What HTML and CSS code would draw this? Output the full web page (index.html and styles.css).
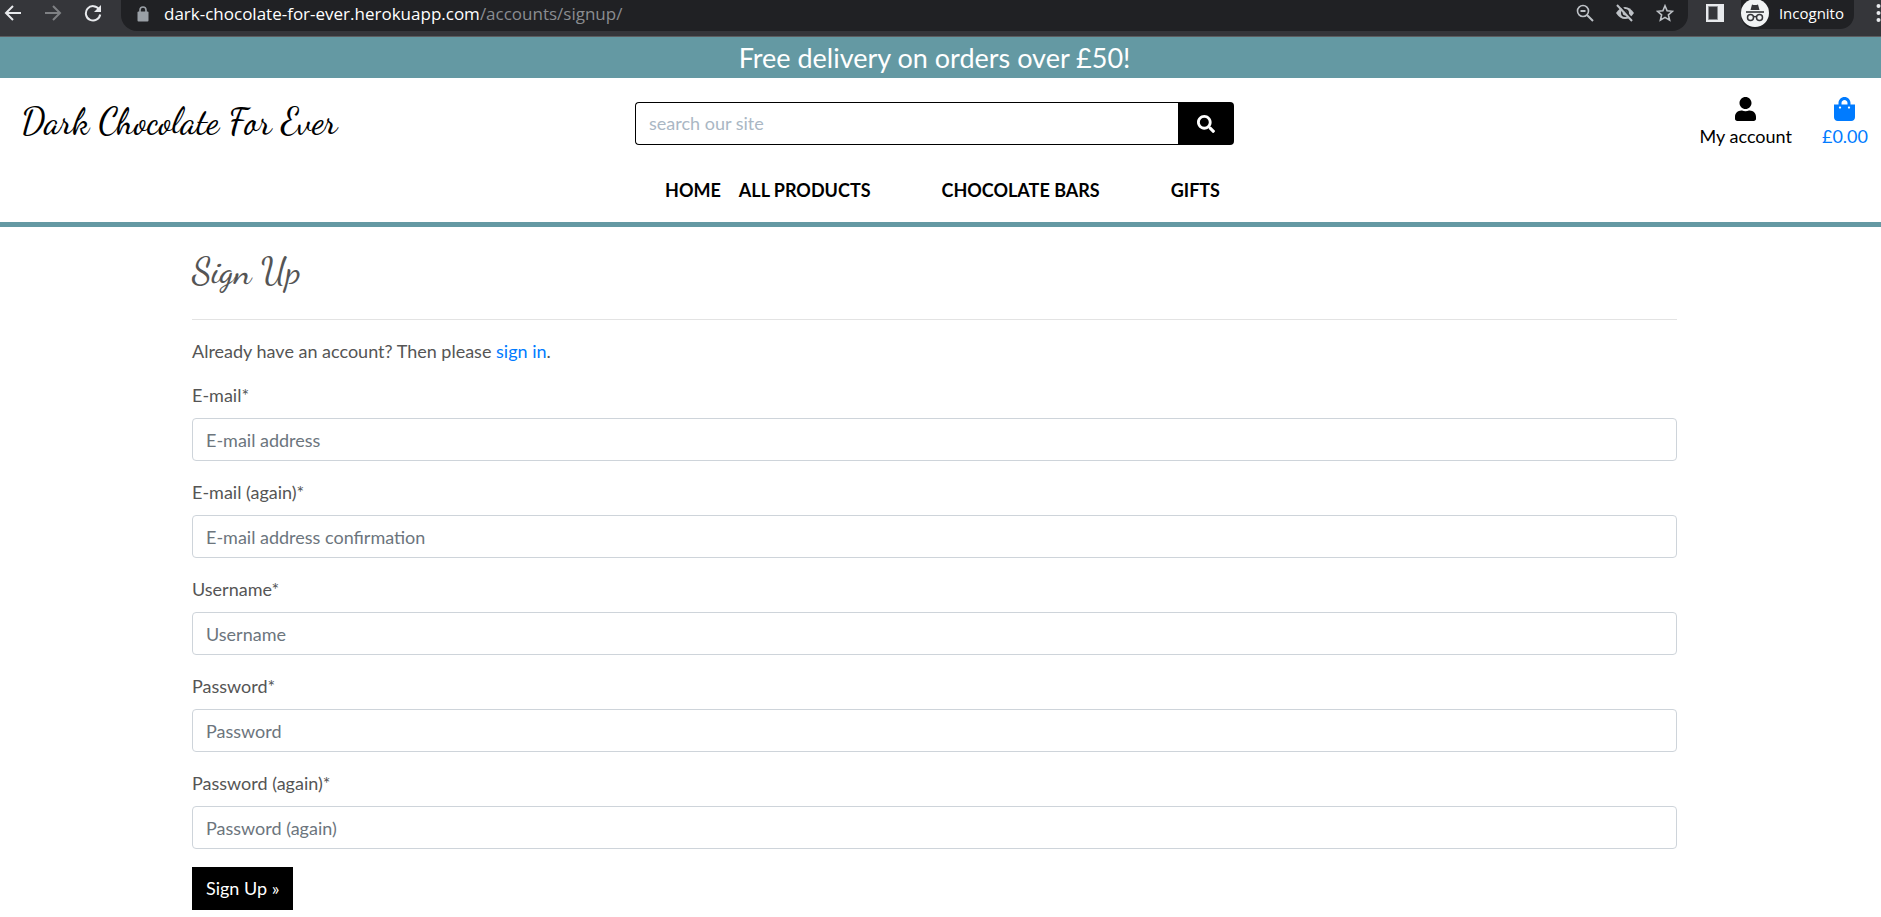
FILE: index.html
```html
<!DOCTYPE html>
<html lang="en">
<head>
<meta charset="utf-8">
<title>Dark Chocolate For Ever - Sign Up</title>
<link rel="stylesheet" href="styles.css">
</head>
<body>
<div class="browser">
  <div class="browser-nav">
    <button class="tool" aria-label="Back"><svg width="18" height="18" viewBox="0 0 18 18"><path d="M17 9H2M9 2L2 9l7 7" fill="none" stroke="#e8eaed" stroke-width="2"/></svg></button>
    <button class="tool" aria-label="Forward"><svg width="18" height="18" viewBox="0 0 18 18"><path d="M1 9h15M9 2l7 7-7 7" fill="none" stroke="#7f8184" stroke-width="2"/></svg></button>
    <button class="tool" aria-label="Reload"><svg width="18" height="18" viewBox="0 0 18 18"><path d="M15 5.200A7.200 7.200 0 1 0 16.200 10.500" fill="none" stroke="#e8eaed" stroke-width="2"/><path d="M17 1v7h-7z" fill="#e8eaed"/></svg></button>
  </div>
  <div class="address">
    <svg class="lock" width="12" height="16" viewBox="0 0 12 16"><path d="M3 7V4a3 3 0 0 1 6 0v3" fill="none" stroke="#9aa0a6" stroke-width="1.600"/><rect x="0.500" y="5.500" width="11" height="10" rx="1" fill="#9aa0a6"/></svg>
    <span class="url"><span class="domain">dark-chocolate-for-ever.herokuapp.com</span>/accounts/signup/</span>
    <button class="tool" aria-label="Zoom"><svg width="18" height="18" viewBox="0 0 18 18"><circle cx="7" cy="7" r="5.500" fill="none" stroke="#bdc1c6" stroke-width="1.600"/><path d="M4.500 7h5M11 11l6 6" stroke="#bdc1c6" stroke-width="2"/></svg></button>
    <button class="tool" aria-label="Third-party cookies blocked"><svg width="20" height="18" viewBox="0 0 20 18"><path d="M1 9q4-6 9-6t9 6q-4 6-9 6t-9-6z" fill="#bdc1c6"/><circle cx="10" cy="9" r="3.200" fill="#bdc1c6" stroke="#202124" stroke-width="1.600"/><path d="M4 0l14 16" stroke="#202124" stroke-width="2"/><path d="M2 1l15 16" stroke="#bdc1c6" stroke-width="2"/></svg></button>
    <button class="tool" aria-label="Bookmark"><svg width="18" height="18" viewBox="0 0 18 18"><path d="M9 1.800l2.100 5 5.400.5-4.100 3.600 1.200 5.300L9 13.400l-4.600 2.800 1.200-5.300L1.500 7.300l5.400-.5z" fill="none" stroke="#bdc1c6" stroke-width="1.600"/></svg></button>
  </div>
  <button class="tool" aria-label="Side panel"><svg width="18" height="18" viewBox="0 0 18 18"><path d="M0 0h18v18H0z" fill="#e8eaed"/><path d="M2.500 2.500h9v13h-9z" fill="#35363a" stroke="#8a8d91"/></svg></button>
  <button class="profile"><svg width="28" height="28" viewBox="0 0 28 28"><circle cx="14" cy="14" r="14" fill="#f1f3f4"/><path d="M9.500 11l1.500-5.500q3 1 6 0l1.500 5.500z" fill="#35363a"/><path d="M5 13h18" stroke="#35363a" stroke-width="1.600"/><g fill="none" stroke="#35363a" stroke-width="1.500"><circle cx="9.500" cy="18.500" r="3"/><circle cx="18.500" cy="18.500" r="3"/><path d="M12.500 18q1.500-1 3 0"/></g></svg>Incognito</button>
  <button class="menu" aria-label="Menu"><svg width="5" height="18" viewBox="0 0 5 18" fill="#e8eaed"><circle cx="2.500" cy="2" r="2"/><circle cx="2.500" cy="9" r="2"/><circle cx="2.500" cy="16" r="2"/></svg></button>
</div>
<div class="banner">Free delivery on orders over £50!</div>
<header class="site-header">
  <div class="top-row">
    <a class="logo" href="#">Dark Chocolate For Ever</a>
    <form class="search" role="search">
      <input class="search-input" type="text" placeholder="search our site" aria-label="Search our site">
      <button class="search-button" type="button" aria-label="Search"><svg width="18" height="18" viewBox="0 0 512 512"><path fill="#fff" d="M505 442.700L405.300 343c-4.500-4.500-10.600-7-17-7H372c27.600-35.300 44-79.700 44-128C416 93.100 322.900 0 208 0S0 93.100 0 208s93.100 208 208 208c48.300 0 92.700-16.400 128-44v16.300c0 6.400 2.500 12.500 7 17l99.700 99.700c9.400 9.400 24.600 9.400 33.900 0l28.300-28.300c9.400-9.400 9.400-24.600.1-34zM208 336c-70.700 0-128-57.200-128-128 0-70.700 57.200-128 128-128 70.700 0 128 57.200 128 128 0 70.700-57.200 128-128 128z"/></svg></button>
    </form>
    <div class="account">
      <a class="account-link" href="#"><svg width="21" height="24" viewBox="0 0 448 512"><path fill="currentColor" d="M224 256c70.700 0 128-57.300 128-128S294.700 0 224 0 96 57.300 96 128s57.300 128 128 128zm89.600 32h-16.700c-22.200 10.200-46.900 16-72.900 16s-50.600-5.800-72.900-16h-16.700C60.200 288 0 348.200 0 422.400V464c0 26.500 21.500 48 48 48h352c26.500 0 48-21.500 48-48v-41.600c0-74.200-60.200-134.400-134.400-134.400z"/></svg>My account</a>
      <a class="account-link bag" href="#"><svg width="21" height="24" viewBox="0 0 448 512"><path fill="currentColor" d="M352 160v-32C352 57.420 294.579 0 224 0 153.420 0 96 57.420 96 128v32H0v272c0 44.183 35.817 80 80 80h288c44.183 0 80-35.817 80-80V160h-96zm-192-32c0-35.290 28.710-64 64-64s64 28.710 64 64v32H160v-32zm160 120c-13.255 0-24-10.745-24-24s10.745-24 24-24 24 10.745 24 24-10.745 24-24 24zm-192 0c-13.255 0-24-10.745-24-24s10.745-24 24-24 24 10.745 24 24-10.745 24-24 24z"/></svg>£0.00</a>
    </div>
  </div>
  <nav class="main-nav">
    <a class="nav-link nav-home" href="#">HOME</a>
    <a class="nav-link" href="#">ALL PRODUCTS</a>
    <a class="nav-link" href="#">CHOCOLATE BARS</a>
    <a class="nav-link" href="#">GIFTS</a>
  </nav>
</header>
<main class="content">
  <h1 class="title">Sign Up</h1>
  <hr class="rule">
  <p class="intro">Already have an account? Then please <a class="link" href="#">sign in</a>.</p>
  <form class="signup">
    <div class="field"><label for="email">E-mail*</label><input id="email" type="email" placeholder="E-mail address"></div>
    <div class="field"><label for="email2">E-mail (again)*</label><input id="email2" type="email" placeholder="E-mail address confirmation"></div>
    <div class="field"><label for="username">Username*</label><input id="username" type="text" placeholder="Username"></div>
    <div class="field"><label for="password">Password*</label><input id="password" type="password" placeholder="Password"></div>
    <div class="field"><label for="password2">Password (again)*</label><input id="password2" type="password" placeholder="Password (again)"></div>
    <button class="submit" type="button">Sign Up »</button>
  </form>
</main>
</body>
</html>
```
FILE: styles.css
```css
* { box-sizing: border-box; }
body { margin: 0; background: #fff; color: #555; font: 18px/27px Lato, sans-serif; }
button, input { font: inherit; }
a { color: inherit; text-decoration: none; }
svg { display: block; flex: none; }

.browser { display: flex; align-items: flex-start; height: 37px; background: #35363a; border-bottom: 1px solid #5c5d60; overflow: hidden; font-family: "Open Sans", sans-serif; }
.tool, .menu { border: 0; padding: 0; margin-top: 4px; background: none; }
.browser-nav { display: flex; gap: 22px; padding: 0 19px 0 4px; }
.address { flex: 1; display: flex; align-items: flex-start; gap: 21px; height: 31px; padding-right: 14px; margin-right: 18px; background: #202124; border-radius: 0 0 16px 16px; }
.lock { margin: 6px -6px 0 16px; }
.url { flex: 1; color: #8a8d91; font-size: 17px; }
.domain { color: #fff; }
.profile { display: flex; align-items: center; gap: 10px; height: 29px; margin: 0 22px 0 17px; padding: 0 10px 3px 0; border: 0; border-radius: 0 0 14px 14px; background: #202124; color: #fff; font-size: 15px; }

.banner { padding: 4px 12px 4px 0; background: #6499a3; color: #fff; font-size: 27px; line-height: 33px; text-align: center; }
.site-header { border-bottom: 5px solid #6499a3; }
.top-row { display: grid; grid-template-columns: 1fr 599px 1fr; padding: 18px 13px 0 1px; }
.logo { padding: 4px 0 0 20px; color: #000; font: 500 36px/43px "Dancing Script", cursive; }
.search { display: flex; height: 43px; margin-top: 6px; }
.search-input { flex: 1; min-width: 0; padding: 0 13px; border: 1px solid #000; border-right: 0; border-radius: 4px 0 0 4px; }
.search-input::placeholder { color: #aab7c4; }
.search-button { display: flex; align-items: center; justify-content: center; width: 56px; padding: 0; border: 0; border-radius: 0 4px 4px 0; background: #000; }
.account { display: flex; justify-content: flex-end; gap: 30px; }
.account-link { display: flex; flex-direction: column; align-items: center; color: #000; }
.account-link svg { margin-bottom: 2px; margin-top: 1px; }
.account-link.bag, .link { color: #007bff; }
.main-nav { display: flex; justify-content: center; gap: 71px; padding: 27px 0 18px 4px; color: #000; font-weight: bold; }
.nav-home { margin-right: -53px; }

.content { padding: 23px 204px 7px 192px; }
.title { margin: 0; font: 500 36px/43px "Dancing Script", cursive; }
.rule { margin: 26px 0 18px; border: 0; border-top: 1px solid #e3e3e3; }
.intro { margin: 0 0 17px; }
.field { display: flex; flex-direction: column; gap: 9px; margin-bottom: 18px; }
.field input { width: 100%; height: 43px; padding: 0 13px; border: 1px solid #ced4da; border-radius: 4px; }
.field input::placeholder { color: #6c757d; }
.submit { height: 43px; padding: 0 14px; border: 0; background: #000; color: #fff; }
```
